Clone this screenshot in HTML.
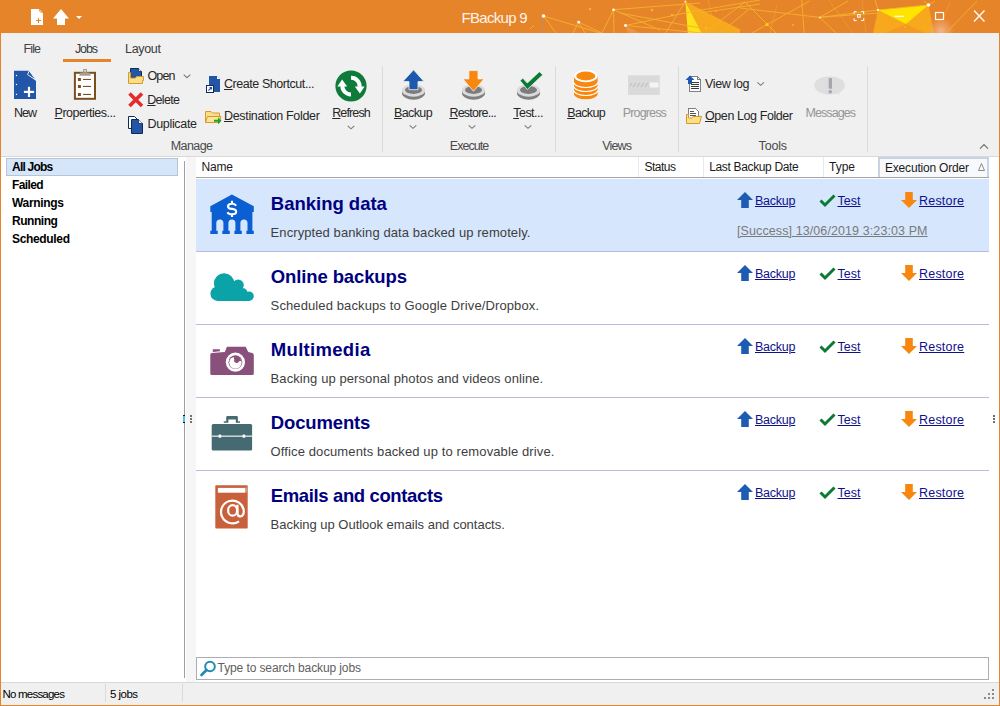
<!DOCTYPE html><html><head><meta charset="utf-8"><title>FBackup 9</title><style>
*{margin:0;padding:0;box-sizing:border-box}
html,body{width:1000px;height:706px;overflow:hidden;background:#fff;font-family:"Liberation Sans",sans-serif}
.t{position:absolute;white-space:nowrap;line-height:0;}
.t u{text-decoration:underline;text-decoration-thickness:1px;text-underline-offset:1px}
.b{position:absolute}
svg{position:absolute;overflow:visible}
</style></head><body>
<div class="b" style="left:0px;top:0px;width:1000px;height:33px;background:#E6842A;"></div>
<svg style="left:0;top:0" width="1000" height="33" viewBox="0 0 1000 33">
<defs><radialGradient id="fl"><stop offset="0" stop-color="#F6C3A0" stop-opacity="0.8"/><stop offset="0.6" stop-color="#F2AE80" stop-opacity="0.4"/><stop offset="1" stop-color="#F0A070" stop-opacity="0"/></radialGradient></defs>
<polygon points="625.5,25.5 640,33 628,33" fill="#EE9A50" opacity="0.7"/>
<polygon points="685.4,1.4 740,29.4 740,33 701.6,33" fill="#F7A81C"/>
<polygon points="685.4,1.4 701.6,33 687.8,33" fill="#FFE21A"/>
<polygon points="878,10 928.5,5 934,33 873,33" fill="#F7A81C"/>
<polygon points="878,10 928.5,5 906,24" fill="#FFE400"/>
<polygon points="885,33 906,24 925,33" fill="#F39A22"/>
<circle cx="941" cy="31" r="14" fill="url(#fl)"/>
<g stroke="#F5B12A" stroke-width="0.9" fill="none">
<line x1="543.5" y1="16" x2="556" y2="33"/><line x1="543.5" y1="16" x2="600" y2="33"/>
<line x1="578.7" y1="22.2" x2="573" y2="33"/><line x1="578.7" y1="22.2" x2="585" y2="33"/><line x1="578.7" y1="22.2" x2="602" y2="33"/>
<line x1="613.5" y1="9.7" x2="602" y2="33"/><line x1="613.5" y1="9.7" x2="614" y2="33"/><line x1="613.5" y1="9.7" x2="660" y2="30"/><line x1="613.5" y1="9.7" x2="700" y2="3"/>
<line x1="625.5" y1="25.5" x2="690" y2="12"/><line x1="690" y1="12" x2="760" y2="0"/><line x1="625.5" y1="25.5" x2="702" y2="33"/>
<line x1="620" y1="13" x2="700" y2="28"/><line x1="665.6" y1="33" x2="685.4" y2="1.4"/>
<line x1="704" y1="33" x2="745" y2="2"/><line x1="700" y1="13" x2="760" y2="4"/><line x1="720" y1="33" x2="748" y2="10"/>
<line x1="744.8" y1="1.8" x2="776" y2="33"/><line x1="752" y1="33" x2="809.6" y2="1"/>
<line x1="801.8" y1="0" x2="804.2" y2="33"/>
<line x1="819.8" y1="17.4" x2="848" y2="1"/><line x1="819.8" y1="17.4" x2="878" y2="10"/><line x1="819.8" y1="17.4" x2="878" y2="13"/><line x1="819.8" y1="17.4" x2="836" y2="33"/>
<line x1="740" y1="8" x2="819.8" y2="17.4"/>
<line x1="878" y1="10" x2="875" y2="0"/><line x1="878" y1="10" x2="928.5" y2="5"/>
<line x1="924" y1="1" x2="928.5" y2="5"/><line x1="935" y1="1" x2="928.5" y2="5"/>
<line x1="946" y1="33" x2="977" y2="1"/><line x1="530" y1="29" x2="534" y2="25"/>
</g>
<g stroke="#F5B12A" stroke-width="0.6" fill="none" opacity="0.7">
<line x1="828.8" y1="0" x2="852.8" y2="33"/><line x1="950" y1="2" x2="943" y2="20"/><line x1="862" y1="0" x2="866" y2="33"/>
<line x1="770" y1="33" x2="777" y2="5"/><line x1="708" y1="0" x2="716" y2="33"/>
</g>
<line x1="543.5" y1="16" x2="541.5" y2="33" stroke="#B8906A" stroke-width="0.9"/>
<g fill="#FFFFFF">
<circle cx="543.5" cy="16" r="1.8"/><circle cx="578.7" cy="22.2" r="1.4"/><circle cx="613.5" cy="9.7" r="1.3"/><circle cx="625.5" cy="25.5" r="1.4"/>
<circle cx="685.4" cy="1.6" r="1.1" fill="#F8E0C0"/><circle cx="819.8" cy="17.4" r="1" fill="#F8E0C0"/>
<circle cx="878" cy="10" r="1.1"/><circle cx="928.5" cy="5" r="1.8"/>
</g>
<g fill="#F7B52C"><circle cx="590" cy="9" r="1.2"/><circle cx="652" cy="10" r="1.3"/><circle cx="672" cy="15" r="1.3"/><circle cx="706" cy="28" r="1.5"/><circle cx="767" cy="24.6" r="1.5" fill="#FFD21A"/><circle cx="716" cy="11" r="0.9"/><circle cx="793" cy="25" r="0.9"/><circle cx="905" cy="27" r="0.9"/></g>
</svg>
<svg style="left:28px;top:7px" width="60" height="20" viewBox="0 0 60 20">
<path d="M3,2 L11,2 L15,6 L15,18 L3,18 Z" fill="#FFFFFF"/>
<path d="M11.3,2.3 L11.8,4.6 L14.6,5.8" fill="none" stroke="#E6842A" stroke-width="0.8"/>
<path d="M8,13.5 h5 M10.5,11 v5" stroke="#E6842A" stroke-width="1"/>
<path d="M33,2 L41,11.6 L37,11.6 L37,18 L29,18 L29,11.6 L25,11.6 Z" fill="#FFFFFF"/>
<path d="M48,9 L54,9 L51,12 Z" fill="#FFFFFF"/>
</svg>
<div class="t" style="left:461.60px;top:18.00px;font-size:15px;letter-spacing:-0.713px;color:#FFF4EC;">FBackup 9</div>
<svg style="left:850px;top:8px" width="150" height="20" viewBox="0 0 150 20">
<g stroke="#FFFFFF" stroke-width="1.2" fill="none">
<path d="M4.1,6 V3.6 H6.6 M11.2,3.6 H13.7 V6 M13.7,10.2 V12.6 H11.2 M6.6,12.6 H4.1 V10.2" stroke-width="1"/>
<rect x="7.6" y="6.6" width="2.6" height="2.6" stroke-width="1"/>
<line x1="44.5" y1="8.3" x2="54" y2="8.3"/>
<rect x="85.5" y="4.5" width="8" height="7"/>
<path d="M124,2.5 L134.5,13.5 M134.5,2.5 L124,13.5" stroke-width="1.3"/>
</g>
</svg>
<div class="b" style="left:0px;top:33px;width:1000px;height:123px;background:#F0F0F0;"></div>
<div class="b" style="left:0px;top:156px;width:1000px;height:1px;background:#D9D9D9;"></div>
<div class="t" style="left:23.60px;top:49.00px;font-size:12.5px;letter-spacing:-0.917px;color:#444444;">File</div>
<div class="t" style="left:75.00px;top:49.00px;font-size:12.5px;letter-spacing:-1.133px;color:#3A3A3A;">Jobs</div>
<div class="t" style="left:125.00px;top:49.00px;font-size:12.5px;letter-spacing:-0.310px;color:#3A3A3A;">Layout</div>
<div class="b" style="left:63px;top:59px;width:48px;height:3px;background:#E6842A;"></div>
<div class="b" style="left:382px;top:66px;width:1px;height:86px;background:#DADADA;"></div>
<div class="b" style="left:555px;top:66px;width:1px;height:86px;background:#DADADA;"></div>
<div class="b" style="left:678px;top:66px;width:1px;height:86px;background:#DADADA;"></div>
<div class="b" style="left:867px;top:66px;width:1px;height:86px;background:#DADADA;"></div>
<div class="t" style="left:14.00px;top:113.00px;font-size:12.5px;letter-spacing:-1.050px;color:#262626;">New</div>
<div class="t" style="left:54.60px;top:113.00px;font-size:12.5px;letter-spacing:-0.500px;color:#262626;"><u>P</u>roperties...</div>
<div class="t" style="left:147.50px;top:76.00px;font-size:12.5px;letter-spacing:-0.867px;color:#262626;">Open</div>
<div class="t" style="left:147.20px;top:100.00px;font-size:12.5px;letter-spacing:-0.690px;color:#262626;"><u>D</u>elete</div>
<div class="t" style="left:147.50px;top:124.00px;font-size:12.5px;letter-spacing:-0.325px;color:#262626;">Duplicate</div>
<div class="t" style="left:224.00px;top:84.00px;font-size:12.5px;letter-spacing:-0.444px;color:#262626;"><u>C</u>reate Shortcut...</div>
<div class="t" style="left:224.00px;top:116.00px;font-size:12.5px;letter-spacing:-0.332px;color:#262626;"><u>D</u>estination Folder</div>
<div class="t" style="left:332.20px;top:113.00px;font-size:12.5px;letter-spacing:-0.875px;color:#262626;"><u>R</u>efresh</div>
<div class="t" style="left:394.00px;top:113.00px;font-size:12.5px;letter-spacing:-0.620px;color:#262626;"><u>B</u>ackup</div>
<div class="t" style="left:449.40px;top:113.00px;font-size:12.5px;letter-spacing:-0.767px;color:#262626;"><u>R</u>estore...</div>
<div class="t" style="left:513.20px;top:113.00px;font-size:12.5px;letter-spacing:-0.508px;color:#262626;"><u>T</u>est...</div>
<div class="t" style="left:567.20px;top:113.00px;font-size:12.5px;letter-spacing:-0.640px;color:#262626;"><u>B</u>ackup</div>
<div class="t" style="left:622.80px;top:113.00px;font-size:12.5px;letter-spacing:-0.857px;color:#959595;">Progress</div>
<div class="t" style="left:705.00px;top:84.00px;font-size:12.5px;letter-spacing:-0.371px;color:#262626;">View log</div>
<div class="t" style="left:705.00px;top:116.00px;font-size:12.5px;letter-spacing:-0.414px;color:#262626;"><u>O</u>pen Log Folder</div>
<div class="t" style="left:805.40px;top:113.00px;font-size:12.5px;letter-spacing:-0.907px;color:#959595;">Messages</div>
<div class="t" style="left:170.75px;top:146.00px;font-size:12.5px;letter-spacing:-0.580px;color:#4A4A4A;">Manage</div>
<div class="t" style="left:449.80px;top:146.00px;font-size:12.5px;letter-spacing:-0.958px;color:#4A4A4A;">Execute</div>
<div class="t" style="left:602.20px;top:146.00px;font-size:12.5px;letter-spacing:-0.825px;color:#4A4A4A;">Views</div>
<div class="t" style="left:758.60px;top:146.00px;font-size:12.5px;letter-spacing:-0.200px;color:#4A4A4A;">Tools</div>
<svg style="left:0;top:0" width="1" height="1"><path d="M183.7,74.7 L187,77.7 L190.3,74.7" stroke="#7A7A7A" stroke-width="1.1" fill="none"/></svg>
<svg style="left:0;top:0" width="1" height="1"><path d="M347.7,125.8 L351,128.8 L354.3,125.8" stroke="#7A7A7A" stroke-width="1.1" fill="none"/></svg>
<svg style="left:0;top:0" width="1" height="1"><path d="M409.7,125.3 L413,128.3 L416.3,125.3" stroke="#7A7A7A" stroke-width="1.1" fill="none"/></svg>
<svg style="left:0;top:0" width="1" height="1"><path d="M468.7,125.3 L472,128.3 L475.3,125.3" stroke="#7A7A7A" stroke-width="1.1" fill="none"/></svg>
<svg style="left:0;top:0" width="1" height="1"><path d="M524.7,125.3 L528,128.3 L531.3,125.3" stroke="#7A7A7A" stroke-width="1.1" fill="none"/></svg>
<svg style="left:0;top:0" width="1" height="1"><path d="M757.4000000000001,82.3 L760.7,85.3 L764.0,82.3" stroke="#7A7A7A" stroke-width="1.1" fill="none"/></svg>
<svg style="left:0;top:0" width="1" height="1"><path d="M980,148.6 L984,144.6 L988,148.6" stroke="#6E6E6E" stroke-width="1.2" fill="none"/></svg>
<svg style="left:10px;top:65px" width="30" height="40" viewBox="0 0 30 40">
<path d="M4,5.7 L19.3,5.7 L26,15.3 L26,34 L4,34 Z" fill="#2256A8"/>
<path d="M19.3,5.7 L17.6,9.6 L26,15.3 Z" fill="#2256A8" stroke="#FFFFFF" stroke-width="0.9"/>
<g fill="#FFFFFF"><rect x="5.9" y="9.9" width="1.2" height="1.2"/><rect x="5.9" y="18.9" width="1.2" height="1.2"/><rect x="5.9" y="28.8" width="1.2" height="1.2"/>
<rect x="13.9" y="25.8" width="10.2" height="2.2"/><rect x="17.9" y="21.8" width="2.2" height="10.2"/></g>
</svg>
<svg style="left:68px;top:65px" width="35" height="40" viewBox="0 0 35 40">
<rect x="6.9" y="7.8" width="20.1" height="26" fill="#FFFFFF" stroke="#7A4E1E" stroke-width="2"/>
<path d="M11,10.8 L12.5,7.4 L21.4,7.4 L22.9,10.8 Z" fill="#A99C90"/>
<rect x="15" y="4" width="4" height="3.6" fill="#A99C90"/><rect x="16.2" y="5.2" width="1.6" height="1.2" fill="#FFFFFF"/>
<g fill="#7A4E1E"><rect x="9.9" y="13" width="3" height="3"/><rect x="9.9" y="20" width="3" height="3"/><rect x="9.9" y="28" width="3" height="3"/>
<rect x="15" y="13.9" width="8" height="1.1"/><rect x="15" y="20.9" width="8" height="1.1"/><rect x="15" y="28.9" width="8" height="1.1"/></g>
</svg>
<svg style="left:125px;top:65px" width="22" height="22" viewBox="0 0 22 22">
<path d="M5.5,3.5 L13.5,3.5 L16.5,6.5 L16.5,12.5 L5.5,12.5 Z" fill="#2357A6" stroke="#0F2A5A" stroke-width="1"/>
<path d="M13.5,3.5 L13.5,6.5 L16.5,6.5" fill="#FFFFFF" stroke="#0F2A5A" stroke-width="0.8"/>
<path d="M3.5,7.5 L5.5,7.5 L5.5,13 L10.5,13 L11.5,11.5 L18.5,11.5 L18.5,15.5 L17.5,15.5 L17.5,18.5 L3.5,18.5 Z" fill="#FBDF86" stroke="#D59A2E" stroke-width="1"/>
</svg>
<svg style="left:125px;top:89px" width="22" height="22" viewBox="0 0 22 22">
<path d="M4.5,4.5 L17,17 M17,4.5 L4.5,17" stroke="#E32B2B" stroke-width="3.6" stroke-linecap="butt"/>
</svg>
<svg style="left:125px;top:113px" width="22" height="22" viewBox="0 0 22 22">
<path d="M3.5,3.5 L9.5,3.5 L12.5,6.5 L12.5,15.5 L3.5,15.5 Z" fill="#FFFFFF" stroke="#0F2A5A" stroke-width="1"/>
<path d="M6.5,6.5 L13.5,6.5 L17.5,10.5 L17.5,20.5 L6.5,20.5 Z" fill="#2357A6" stroke="#0F2A5A" stroke-width="1"/>
<path d="M13.5,6.5 L13.5,10.5 L17.5,10.5" fill="#FFFFFF" stroke="#0F2A5A" stroke-width="0.8"/>
</svg>
<svg style="left:203px;top:73px" width="22" height="22" viewBox="0 0 22 22">
<path d="M6,3 L14,3 L17,6 L17,19 L6,19 Z" fill="#2357A6"/>
<path d="M14,3 L14,6 L17,6" fill="#FFFFFF"/>
<rect x="3.5" y="12.5" width="7" height="7" fill="#FFFFFF" stroke="#0F2A5A" stroke-width="1"/>
<path d="M5.5,17.5 L8.5,14.5 M6.5,14.5 L8.5,14.5 L8.5,16.5" stroke="#2357A6" stroke-width="1.1" fill="none"/>
</svg>
<svg style="left:203px;top:107px" width="22" height="22" viewBox="0 0 22 22">
<path d="M2.5,4.5 L8,4.5 L9.5,6 L16.5,6 L16.5,15.5 L2.5,15.5 Z" fill="#FBDF86" stroke="#D59A2E" stroke-width="1"/>
<path d="M2.5,15.5 L4.5,9.5 L18,9.5 L16.5,15.5 Z" fill="#FCE59A" stroke="#D59A2E" stroke-width="1"/>
<path d="M11,12.8 L15,12.8 L15,10.3 L18.5,13.8 L15,17.3 L15,14.8 L11,14.8 Z" fill="#1EA51E"/>
</svg>
<svg style="left:335px;top:69.5px" width="32" height="32" viewBox="0 0 32 32">
<circle cx="16" cy="16" r="15.6" fill="#0E7B3B"/>
<path d="M16,7.8 A8.4,8.4 0 0 1 24.6,16.8" stroke="#FFFFFF" stroke-width="4" fill="none"/>
<path d="M19.8,16.6 L29.6,16.6 L24.9,23.4 Z" fill="#FFFFFF"/>
<path d="M16,24.4 A8.4,8.4 0 0 1 7.4,15.6" stroke="#FFFFFF" stroke-width="4" fill="none"/>
<path d="M2.4,16.4 L12.2,16.4 L7.1,9.6 Z" fill="#FFFFFF"/>
</svg>
<svg style="left:401px;top:84px" width="26" height="18" viewBox="0 0 26 18">
<ellipse cx="12.5" cy="8.8" rx="11.6" ry="6.9" fill="#7F7F7F"/>
<ellipse cx="12.5" cy="6.4" rx="11.6" ry="6.3" fill="#DADADA"/>
<ellipse cx="12.5" cy="6.0" rx="8.5" ry="3.9" fill="#7C7C7C"/>
</svg>
<svg style="left:461px;top:84px" width="26" height="18" viewBox="0 0 26 18">
<ellipse cx="12.5" cy="8.8" rx="11.6" ry="6.9" fill="#7F7F7F"/>
<ellipse cx="12.5" cy="6.4" rx="11.6" ry="6.3" fill="#DADADA"/>
<ellipse cx="12.5" cy="6.0" rx="8.5" ry="3.9" fill="#7C7C7C"/>
</svg>
<svg style="left:516px;top:84px" width="26" height="18" viewBox="0 0 26 18">
<ellipse cx="12.5" cy="8.8" rx="11.6" ry="6.9" fill="#7F7F7F"/>
<ellipse cx="12.5" cy="6.4" rx="11.6" ry="6.3" fill="#DADADA"/>
<ellipse cx="12.5" cy="6.0" rx="8.5" ry="3.9" fill="#7C7C7C"/>
</svg>
<svg style="left:400px;top:68px" width="28" height="24" viewBox="0 0 28 24">
<path d="M13.6,1.8 L24,13.6 L18,13.6 L18,21.7 L9,21.7 L9,13.6 L2.8,13.6 Z" fill="#1E58AE" stroke="#F4F4F4" stroke-width="0.8"/>
</svg>
<svg style="left:460px;top:68px" width="28" height="26" viewBox="0 0 28 26">
<path d="M8.9,2.6 L18,2.6 L18,10.9 L24,10.9 L13.5,23.3 L2.9,10.9 L8.9,10.9 Z" fill="#F7870E" stroke="#F4F4F4" stroke-width="0.8"/>
</svg>
<svg style="left:515px;top:68px" width="32" height="24" viewBox="0 0 32 24">
<path d="M7.7,10 L12.3,15 L24.3,3.7 L27.9,6.7 L12.3,21.5 L5.1,12.7 Z" fill="#0B7A35" stroke="#F4F4F4" stroke-width="0.8"/>
</svg>
<svg style="left:572px;top:68px" width="28" height="34" viewBox="0 0 28 34">
<path d="M2,8 L2,26 A11.8,5.2 0 0 0 25.6,26 L25.6,8 Z" fill="#F7870E"/>
<ellipse cx="13.8" cy="8" rx="11.8" ry="6.2" fill="#FFFFFF"/>
<ellipse cx="13.8" cy="8" rx="9.6" ry="4.4" fill="#F7870E"/>
<g stroke="#FFFFFF" stroke-width="1.1" fill="none">
<path d="M2,14.5 A11.8,5 0 0 0 25.6,14.5"/><path d="M2,18.5 A11.8,5 0 0 0 25.6,18.5"/><path d="M2,22.5 A11.8,5 0 0 0 25.6,22.5"/>
</g>
</svg>
<svg style="left:627px;top:75px" width="34" height="22" viewBox="0 0 34 22">
<rect x="1" y="0.3" width="31.8" height="19.6" fill="#DADADA"/>
<rect x="2.5" y="7.5" width="29" height="5" fill="#F4F4F4"/>
<rect x="2.5" y="7.5" width="20" height="5" fill="#C9C9C9"/>
<path d="M4,12.5 L7,7.5 M8,12.5 L11,7.5 M12,12.5 L15,7.5 M16,12.5 L19,7.5 M20,12.5 L22.5,8.2" stroke="#E2E2E2" stroke-width="1.2"/>
</svg>
<svg style="left:682px;top:72px" width="24" height="24" viewBox="0 0 24 24" shape-rendering="crispEdges">
<path d="M7.5,4.5 L15.5,4.5 L18.5,7.5 L18.5,19.5 L7.5,19.5 Z" fill="#FFFFFF" stroke="#808080" stroke-width="1"/>
<path d="M15.5,4.5 L15.5,7.5 L18.5,7.5" fill="none" stroke="#808080" stroke-width="1"/>
<g fill="#3A3A3A"><rect x="9" y="10" width="8" height="1"/><rect x="9" y="12" width="8" height="1"/><rect x="9" y="14" width="8" height="1"/><rect x="9" y="16" width="8" height="1"/></g>
<path d="M8,3.5 L12.5,8 L10,8 L10,12 L6,12 L6,8 L3.5,8 Z" fill="#1E58AE" shape-rendering="auto"/>
</svg>
<svg style="left:682px;top:104px" width="24" height="24" viewBox="0 0 24 24" shape-rendering="crispEdges">
<path d="M6.5,4.5 L13.5,4.5 L16.5,7.5 L16.5,15 L6.5,15 Z" fill="#FFFFFF" stroke="#808080" stroke-width="1"/>
<g fill="#555"><rect x="8" y="7" width="4" height="1"/><rect x="8" y="9" width="6" height="1"/><rect x="8" y="11" width="6" height="1"/></g>
<path d="M4.5,10.5 L6.5,10.5 L6.5,14 L10,14 L11,12.5 L19.5,12.5 L17.5,19.5 L4.5,19.5 Z" fill="#FBDF86" stroke="#D59A2E" stroke-width="1" shape-rendering="auto"/>
</svg>
<svg style="left:808px;top:70px" width="44" height="30" viewBox="0 0 44 30">
<ellipse cx="21.6" cy="15.4" rx="15.2" ry="9.25" fill="#DEDEDE"/>
<path d="M28,22 L32,25.8 L30,21 Z" fill="#DEDEDE"/>
<rect x="20.7" y="8.1" width="3.3" height="10.6" fill="#A6A6AE"/>
<circle cx="22.3" cy="21.8" r="1.8" fill="#A6A6AE"/>
</svg>
<div class="b" style="left:1px;top:157px;width:182px;height:525px;background:#FFFFFF;"></div>
<div class="b" style="left:6px;top:158px;width:172px;height:18px;background:#D5E6FA;border:1px solid #B9C4D2;"></div>
<div class="t" style="left:12.10px;top:167.00px;font-size:12px;letter-spacing:-0.800px;color:#000000;font-weight:bold;">All Jobs</div>
<div class="t" style="left:12.00px;top:185.00px;font-size:12px;letter-spacing:-0.600px;color:#000000;font-weight:bold;">Failed</div>
<div class="t" style="left:12.00px;top:203.00px;font-size:12px;letter-spacing:-0.336px;color:#000000;font-weight:bold;">Warnings</div>
<div class="t" style="left:12.00px;top:221.00px;font-size:12px;letter-spacing:-0.458px;color:#000000;font-weight:bold;">Running</div>
<div class="t" style="left:12.00px;top:239.00px;font-size:12px;letter-spacing:-0.338px;color:#000000;font-weight:bold;">Scheduled</div>
<div class="b" style="left:186px;top:157px;width:10px;height:525px;background:#F6F6F6;"></div>
<div class="b" style="left:184px;top:161px;width:1px;height:517px;background:#A0A0A0;"></div>
<div class="b" style="left:190px;top:415px;width:2px;height:2px;background:#6F6F6F;"></div>
<div class="b" style="left:993px;top:415px;width:2px;height:2px;background:#6F6F6F;"></div>
<div class="b" style="left:190px;top:418px;width:2px;height:2px;background:#6F6F6F;"></div>
<div class="b" style="left:993px;top:418px;width:2px;height:2px;background:#6F6F6F;"></div>
<div class="b" style="left:190px;top:421px;width:2px;height:2px;background:#6F6F6F;"></div>
<div class="b" style="left:993px;top:421px;width:2px;height:2px;background:#6F6F6F;"></div>
<div class="b" style="left:183px;top:415px;width:1.5px;height:8px;background:#5BB8F0;border-top:1px solid #111;border-bottom:1px solid #111;"></div>
<div class="b" style="left:196px;top:157px;width:793px;height:525px;background:#FFFFFF;"></div>
<div class="b" style="left:196px;top:177px;width:793px;height:1px;background:#A3A3A3;"></div>
<div class="b" style="left:638px;top:157px;width:1px;height:20px;background:#E3EAF3;"></div>
<div class="b" style="left:703px;top:157px;width:1px;height:20px;background:#E3EAF3;"></div>
<div class="b" style="left:823px;top:157px;width:1px;height:20px;background:#E3EAF3;"></div>
<div class="b" style="left:878px;top:157px;width:111px;height:20px;background:#F7F9FC;border:2px solid #C8D4E3;border-bottom:none;"></div>
<div class="t" style="left:201.40px;top:167.00px;font-size:12px;letter-spacing:-0.167px;color:#1A1A1A;">Name</div>
<div class="t" style="left:644.50px;top:167.00px;font-size:12px;letter-spacing:-0.500px;color:#1A1A1A;">Status</div>
<div class="t" style="left:709.20px;top:167.00px;font-size:12px;letter-spacing:-0.343px;color:#1A1A1A;">Last Backup Date</div>
<div class="t" style="left:829.00px;top:167.00px;font-size:12px;letter-spacing:0.000px;color:#1A1A1A;">Type</div>
<div class="t" style="left:885.00px;top:168.00px;font-size:12px;letter-spacing:-0.193px;color:#1A1A1A;">Execution Order</div>
<svg style="left:977px;top:162px" width="10" height="10" viewBox="0 0 10 10"><path d="M1.5,8.5 L4.5,1.5 L7.5,8.5 Z" fill="none" stroke="#8A8A8A" stroke-width="1"/></svg>
<div class="b" style="left:196px;top:179px;width:793px;height:72px;background:#D6E6FC;"></div>
<div class="b" style="left:196px;top:251px;width:793px;height:1px;background:#B7BDDA;"></div>
<div class="b" style="left:196px;top:324px;width:793px;height:1px;background:#B7BDDA;"></div>
<div class="b" style="left:196px;top:397px;width:793px;height:1px;background:#B7BDDA;"></div>
<div class="b" style="left:196px;top:470px;width:793px;height:1px;background:#B7BDDA;"></div>
<div class="t" style="left:270.80px;top:204.00px;font-size:18.5px;letter-spacing:-0.009px;color:#000080;font-weight:bold;">Banking data</div>
<div class="t" style="left:270.60px;top:233.00px;font-size:13px;letter-spacing:0.085px;color:#3E3E3E;">Encrypted banking data backed up remotely.</div>
<div class="t" style="left:755.00px;top:201.00px;font-size:12.5px;letter-spacing:-0.240px;color:#10108C;"><u>Backup</u></div>
<div class="t" style="left:837.50px;top:201.00px;font-size:12.5px;letter-spacing:0.033px;color:#10108C;"><u>Test</u></div>
<div class="t" style="left:919.00px;top:201.00px;font-size:12.5px;letter-spacing:0.208px;color:#10108C;"><u>Restore</u></div>
<svg style="left:735px;top:190px" width="20" height="20" viewBox="0 0 20 20">
<path d="M10,2 L18,10 L13.8,10 L13.8,18 L6.2,18 L6.2,10 L2,10 Z" fill="#1E5CB3"/></svg>
<svg style="left:817px;top:190px" width="20" height="20" viewBox="0 0 20 20">
<path d="M3.5,10.5 L8,15 L17.5,5.5" stroke="#0B7A35" stroke-width="3" fill="none"/></svg>
<svg style="left:899px;top:190px" width="20" height="20" viewBox="0 0 20 20">
<path d="M6.2,2 L13.8,2 L13.8,10 L18,10 L10,18 L2,10 L6.2,10 Z" fill="#F7870E"/></svg>
<div class="t" style="left:270.80px;top:277.00px;font-size:18.5px;letter-spacing:-0.119px;color:#000080;font-weight:bold;">Online backups</div>
<div class="t" style="left:270.60px;top:306.00px;font-size:13px;letter-spacing:0.113px;color:#3E3E3E;">Scheduled backups to Google Drive/Dropbox.</div>
<div class="t" style="left:755.00px;top:274.00px;font-size:12.5px;letter-spacing:-0.240px;color:#10108C;"><u>Backup</u></div>
<div class="t" style="left:837.50px;top:274.00px;font-size:12.5px;letter-spacing:0.033px;color:#10108C;"><u>Test</u></div>
<div class="t" style="left:919.00px;top:274.00px;font-size:12.5px;letter-spacing:0.208px;color:#10108C;"><u>Restore</u></div>
<svg style="left:735px;top:263px" width="20" height="20" viewBox="0 0 20 20">
<path d="M10,2 L18,10 L13.8,10 L13.8,18 L6.2,18 L6.2,10 L2,10 Z" fill="#1E5CB3"/></svg>
<svg style="left:817px;top:263px" width="20" height="20" viewBox="0 0 20 20">
<path d="M3.5,10.5 L8,15 L17.5,5.5" stroke="#0B7A35" stroke-width="3" fill="none"/></svg>
<svg style="left:899px;top:263px" width="20" height="20" viewBox="0 0 20 20">
<path d="M6.2,2 L13.8,2 L13.8,10 L18,10 L10,18 L2,10 L6.2,10 Z" fill="#F7870E"/></svg>
<div class="t" style="left:270.80px;top:350.00px;font-size:18.5px;letter-spacing:0.311px;color:#000080;font-weight:bold;">Multimedia</div>
<div class="t" style="left:270.60px;top:379.00px;font-size:13px;letter-spacing:0.085px;color:#3E3E3E;">Backing up personal photos and videos online.</div>
<div class="t" style="left:755.00px;top:347.00px;font-size:12.5px;letter-spacing:-0.240px;color:#10108C;"><u>Backup</u></div>
<div class="t" style="left:837.50px;top:347.00px;font-size:12.5px;letter-spacing:0.033px;color:#10108C;"><u>Test</u></div>
<div class="t" style="left:919.00px;top:347.00px;font-size:12.5px;letter-spacing:0.208px;color:#10108C;"><u>Restore</u></div>
<svg style="left:735px;top:336px" width="20" height="20" viewBox="0 0 20 20">
<path d="M10,2 L18,10 L13.8,10 L13.8,18 L6.2,18 L6.2,10 L2,10 Z" fill="#1E5CB3"/></svg>
<svg style="left:817px;top:336px" width="20" height="20" viewBox="0 0 20 20">
<path d="M3.5,10.5 L8,15 L17.5,5.5" stroke="#0B7A35" stroke-width="3" fill="none"/></svg>
<svg style="left:899px;top:336px" width="20" height="20" viewBox="0 0 20 20">
<path d="M6.2,2 L13.8,2 L13.8,10 L18,10 L10,18 L2,10 L6.2,10 Z" fill="#F7870E"/></svg>
<div class="t" style="left:270.80px;top:423.00px;font-size:18.5px;letter-spacing:-0.144px;color:#000080;font-weight:bold;">Documents</div>
<div class="t" style="left:270.60px;top:452.00px;font-size:13px;letter-spacing:0.113px;color:#3E3E3E;">Office documents backed up to removable drive.</div>
<div class="t" style="left:755.00px;top:420.00px;font-size:12.5px;letter-spacing:-0.240px;color:#10108C;"><u>Backup</u></div>
<div class="t" style="left:837.50px;top:420.00px;font-size:12.5px;letter-spacing:0.033px;color:#10108C;"><u>Test</u></div>
<div class="t" style="left:919.00px;top:420.00px;font-size:12.5px;letter-spacing:0.208px;color:#10108C;"><u>Restore</u></div>
<svg style="left:735px;top:409px" width="20" height="20" viewBox="0 0 20 20">
<path d="M10,2 L18,10 L13.8,10 L13.8,18 L6.2,18 L6.2,10 L2,10 Z" fill="#1E5CB3"/></svg>
<svg style="left:817px;top:409px" width="20" height="20" viewBox="0 0 20 20">
<path d="M3.5,10.5 L8,15 L17.5,5.5" stroke="#0B7A35" stroke-width="3" fill="none"/></svg>
<svg style="left:899px;top:409px" width="20" height="20" viewBox="0 0 20 20">
<path d="M6.2,2 L13.8,2 L13.8,10 L18,10 L10,18 L2,10 L6.2,10 Z" fill="#F7870E"/></svg>
<div class="t" style="left:270.80px;top:496.00px;font-size:18.5px;letter-spacing:-0.372px;color:#000080;font-weight:bold;">Emails and contacts</div>
<div class="t" style="left:270.60px;top:525.00px;font-size:13px;letter-spacing:-0.017px;color:#3E3E3E;">Backing up Outlook emails and contacts.</div>
<div class="t" style="left:755.00px;top:493.00px;font-size:12.5px;letter-spacing:-0.240px;color:#10108C;"><u>Backup</u></div>
<div class="t" style="left:837.50px;top:493.00px;font-size:12.5px;letter-spacing:0.033px;color:#10108C;"><u>Test</u></div>
<div class="t" style="left:919.00px;top:493.00px;font-size:12.5px;letter-spacing:0.208px;color:#10108C;"><u>Restore</u></div>
<svg style="left:735px;top:482px" width="20" height="20" viewBox="0 0 20 20">
<path d="M10,2 L18,10 L13.8,10 L13.8,18 L6.2,18 L6.2,10 L2,10 Z" fill="#1E5CB3"/></svg>
<svg style="left:817px;top:482px" width="20" height="20" viewBox="0 0 20 20">
<path d="M3.5,10.5 L8,15 L17.5,5.5" stroke="#0B7A35" stroke-width="3" fill="none"/></svg>
<svg style="left:899px;top:482px" width="20" height="20" viewBox="0 0 20 20">
<path d="M6.2,2 L13.8,2 L13.8,10 L18,10 L10,18 L2,10 L6.2,10 Z" fill="#F7870E"/></svg>
<div class="t" style="left:737.00px;top:231.00px;font-size:12.5px;letter-spacing:0.097px;color:#7A7A7A;"><u>[Success] 13/06/2019 3:23:03 PM</u></div>
<svg style="left:205px;top:190px" width="55" height="50" viewBox="0 0 55 50">
<path fill-rule="evenodd" fill="#0B5FD2" d="M5.3,16.3 L26.9,4.6 L48.8,16.3 L48.8,22 L47.4,22 L47.4,40.7 L48.8,40.7 L48.8,43.9 L5.3,43.9 L5.3,40.7 L6.7,40.7 L6.7,22 L5.3,22 Z
M11.3,40.7 L11.3,33 A3.55,3.55 0 0 1 18.4,33 L18.4,40.7 L17.3,40.7 L17.3,43.9 L12.7,43.9 L12.7,40.7 Z
M23.4,40.7 L23.4,33 A3.5,3.5 0 0 1 30.4,33 L30.4,40.7 L29.4,40.7 L29.4,43.9 L24.8,43.9 L24.8,40.7 Z
M35.4,40.7 L35.4,33 A3.55,3.55 0 0 1 42.5,33 L42.5,40.7 L41.4,40.7 L41.4,43.9 L36.8,43.9 L36.8,40.7 Z"/>
<path d="M31,15.8 Q30,13.8 27,13.8 Q23,13.8 23,16.4 Q23,18.5 27,18.9 Q31.2,19.3 31.2,21.8 Q31.2,24.3 27,24.3 Q23.6,24.3 22.4,22.2 M27,10.7 V13.8 M27,24.3 V27" stroke="#FFFFFF" stroke-width="2.1" fill="none"/>
</svg>
<svg style="left:205px;top:265px" width="55" height="45" viewBox="0 0 55 45">
<path fill="#0BA3A7" d="M8.900000000000002,18.5 A10.2,10.2 0 1 0 29.3,18.5 A10.2,10.2 0 1 0 8.900000000000002,18.5 Z M27.400000000000002,20.3 A5.7,5.7 0 1 0 38.800000000000004,20.3 A5.7,5.7 0 1 0 27.400000000000002,20.3 Z M5.3999999999999995,28.7 A7.3,7.3 0 1 0 20.0,28.7 A7.3,7.3 0 1 0 5.3999999999999995,28.7 Z M39.2,31.2 A4.8,4.8 0 1 0 48.8,31.2 A4.8,4.8 0 1 0 39.2,31.2 Z M32.5,28 A5,5 0 1 0 42.5,28 A5,5 0 1 0 32.5,28 Z "/>
<polygon fill="#0BA3A7" points="19,18 33,20 37.5,28 44,31 44,36 12.7,36 12.7,28"/>
</svg>
<svg style="left:205px;top:335px" width="55" height="50" viewBox="0 0 55 50">
<path d="M5.3,19.5 Q5.3,18 7,18 L19.8,17 L21.9,11.7 L40.7,11.7 L43.2,17 L47.3,18 Q48.8,18.3 48.8,20 L48.8,38.5 Q48.8,40 47.3,40 L6.8,40 Q5.3,40 5.3,38.5 Z" fill="#88507A"/>
<path d="M7.8,14.2 L14.9,14.2 L14.9,16.2 L7.8,17 Z" fill="#88507A"/>
<circle cx="30.4" cy="27.2" r="9.6" fill="#FFFFFF"/>
<circle cx="30.4" cy="27.2" r="6.9" fill="#88507A"/>
<circle cx="30.4" cy="27.6" r="6.2" fill="#FFFFFF"/>
<path d="M24.3,24.6 A6.4,6.4 0 0 1 36.3,25.8 L34.2,26.2 A2.6,2.6 0 0 1 29.3,24.4 L28.6,21.9 A5.6,5.6 0 0 0 24.3,24.6 Z" fill="#88507A"/>
</svg>
<svg style="left:205px;top:405px" width="55" height="50" viewBox="0 0 55 50">
<rect x="6.7" y="19.1" width="40.4" height="26.5" rx="1.5" fill="#456A72"/>
<path d="M18.8,17.7 L18.8,16.3 L21.2,16.3 L21.2,12.2 Q21.2,11 22.4,11 L31.7,11 Q32.9,11 32.9,12.2 L32.9,16.3 L35,16.3 L35,17.7 L30.8,17.7 L30.8,14.5 L23.4,14.5 L23.4,17.7 Z" fill="#456A72"/>
<rect x="6.7" y="30.6" width="40.4" height="1.1" fill="#FFFFFF"/>
<rect x="13.6" y="29.6" width="2.6" height="3.1" fill="#FFFFFF"/><rect x="37.6" y="29.6" width="2.6" height="3.1" fill="#FFFFFF"/>
</svg>
<svg style="left:208px;top:478px" width="48" height="56" viewBox="0 0 48 56">
<rect x="7.3" y="7.3" width="32.4" height="43.1" rx="1" fill="#C8613B"/>
<rect x="9.9" y="9.9" width="27.4" height="4.8" fill="#FFFFFF"/>
<rect x="37.3" y="9.5" width="1.5" height="5" fill="#E2A890"/>
<g stroke="#FFFFFF" stroke-width="2.2" fill="none"><path d="M35.8,33 A11.4,11.4 0 1 0 31,43.3"/><ellipse cx="24.6" cy="32.4" rx="4.5" ry="5.3"/><path d="M29.4,26.8 L29.6,36 Q30,38.6 32.4,38.4 Q35.8,38 35.8,33"/></g>
</svg>
<div class="b" style="left:196px;top:657px;width:793px;height:23px;background:#FFFFFF;border:1px solid #ABADB3;"></div>
<svg style="left:198px;top:659px" width="20" height="20" viewBox="0 0 20 20">
<circle cx="12" cy="7.5" r="4.8" fill="none" stroke="#1F8BB3" stroke-width="2"/>
<path d="M8.5,11 L3.5,16" stroke="#1F8BB3" stroke-width="2.6" stroke-linecap="round"/>
</svg>
<div class="t" style="left:217.60px;top:668.00px;font-size:12px;letter-spacing:-0.108px;color:#5E5E5E;">Type to search backup jobs</div>
<div class="b" style="left:1px;top:682px;width:998px;height:1px;background:#D9D9D9;"></div>
<div class="b" style="left:1px;top:683px;width:998px;height:22px;background:#F0F0F0;"></div>
<div class="b" style="left:105px;top:684px;width:1px;height:18px;background:#DADADA;"></div>
<div class="b" style="left:182px;top:684px;width:1px;height:18px;background:#DADADA;"></div>
<div class="t" style="left:2.40px;top:694.00px;font-size:11.5px;letter-spacing:-0.770px;color:#000000;">No messages</div>
<div class="t" style="left:110.00px;top:694.00px;font-size:11.5px;letter-spacing:-0.540px;color:#000000;">5 jobs</div>
<div class="b" style="left:992px;top:689px;width:2px;height:2px;background:#8A8A8A;"></div>
<div class="b" style="left:988px;top:693px;width:2px;height:2px;background:#8A8A8A;"></div>
<div class="b" style="left:992px;top:693px;width:2px;height:2px;background:#8A8A8A;"></div>
<div class="b" style="left:984px;top:697px;width:2px;height:2px;background:#8A8A8A;"></div>
<div class="b" style="left:988px;top:697px;width:2px;height:2px;background:#8A8A8A;"></div>
<div class="b" style="left:992px;top:697px;width:2px;height:2px;background:#8A8A8A;"></div>
<div class="b" style="left:0px;top:0px;width:1px;height:706px;background:#E6842A;"></div>
<div class="b" style="left:999px;top:0px;width:1px;height:706px;background:#E6842A;"></div>
<div class="b" style="left:0px;top:705px;width:1000px;height:1px;background:#E6842A;"></div>
</body></html>
